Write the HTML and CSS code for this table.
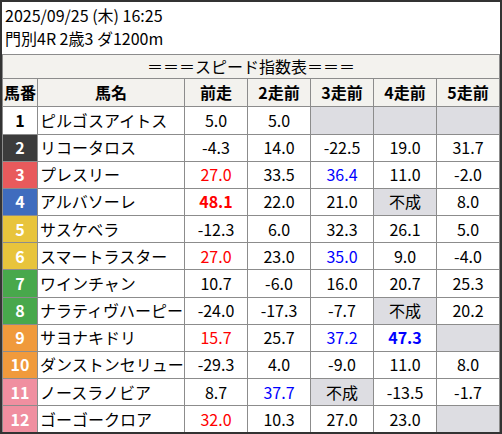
FILE: index.html
```html
<!DOCTYPE html>
<html lang="ja">
<head>
<meta charset="utf-8">
<link rel="stylesheet" href="styles.css">
</head>
<body>
<div class="wrap">
  <div class="info">
    <div>2025/09/25 (木) 16:25</div>
    <div>門別4R 2歳3 ダ1200m</div>
  </div>
  <table class="speed">
    <colgroup>
      <col class="c-no"><col class="c-name"><col class="c-v"><col class="c-v"><col class="c-v"><col class="c-v"><col class="c-v">
    </colgroup>
    <thead>
      <tr class="caption-row"><th colspan="7">＝＝＝スピード指数表＝＝＝</th></tr>
      <tr class="head-row"><th>馬番</th><th>馬名</th><th>前走</th><th>2走前</th><th>3走前</th><th>4走前</th><th>5走前</th></tr>
    </thead>
    <tbody>
      <tr><td class="no w1">1</td><td class="name">ピルゴスアイトス</td><td>5.0</td><td>5.0</td><td class="na"></td><td class="na"></td><td class="na"></td></tr>
      <tr><td class="no w2">2</td><td class="name">リコータロス</td><td>-4.3</td><td>14.0</td><td>-22.5</td><td>19.0</td><td>31.7</td></tr>
      <tr><td class="no w3">3</td><td class="name">プレスリー</td><td class="red">27.0</td><td>33.5</td><td class="blue">36.4</td><td>11.0</td><td>-2.0</td></tr>
      <tr><td class="no w4">4</td><td class="name">アルバソーレ</td><td class="red b">48.1</td><td>22.0</td><td>21.0</td><td class="na">不成</td><td>8.0</td></tr>
      <tr><td class="no w5">5</td><td class="name">サスケベラ</td><td>-12.3</td><td>6.0</td><td>32.3</td><td>26.1</td><td>5.0</td></tr>
      <tr><td class="no w5">6</td><td class="name">スマートラスター</td><td class="red">27.0</td><td>23.0</td><td class="blue">35.0</td><td>9.0</td><td>-4.0</td></tr>
      <tr><td class="no w7">7</td><td class="name">ワインチャン</td><td>10.7</td><td>-6.0</td><td>16.0</td><td>20.7</td><td>25.3</td></tr>
      <tr><td class="no w7">8</td><td class="name">ナラティヴハーピー</td><td>-24.0</td><td>-17.3</td><td>-7.7</td><td class="na">不成</td><td>20.2</td></tr>
      <tr><td class="no w9">9</td><td class="name">サヨナキドリ</td><td class="red">15.7</td><td>25.7</td><td class="blue">37.2</td><td class="blue b">47.3</td><td class="na"></td></tr>
      <tr><td class="no w9">10</td><td class="name">ダンストンセリュー</td><td>-29.3</td><td>4.0</td><td>-9.0</td><td>11.0</td><td>8.0</td></tr>
      <tr><td class="no w11">11</td><td class="name">ノースラノビア</td><td>8.7</td><td class="blue">37.7</td><td class="na">不成</td><td>-13.5</td><td>-1.7</td></tr>
      <tr><td class="no w11">12</td><td class="name">ゴーゴークロア</td><td class="red">32.0</td><td>10.3</td><td>27.0</td><td>23.0</td><td class="na"></td></tr>
    </tbody>
  </table>
</div>
</body>
</html>
```

FILE: styles.css
```css
html, body {
  margin: 0;
  padding: 0;
  background: #ffffff;
}
body {
  font-family: "Noto Sans CJK JP", "Noto Sans", sans-serif;
  font-size: 16px;
  color: #000;
}
.wrap {
  width: 498px;
  height: 430px;
  border: 2px solid #333333;
  overflow: hidden;
  background: #fff;
}
.info {
  height: 52px;
  box-sizing: border-box;
  padding: 2px 3px 0 3px;
  line-height: 23.17px;
}
.speed {
  width: 498px;
  border-collapse: collapse;
  table-layout: fixed;
}
.c-no { width: 35px; }
.c-name { width: 147px; }
.c-v { width: 63px; }
.speed th,
.speed td {
  border: 1px solid #8c8c8c;
  line-height: 23.17px;
  padding: 1.5px 0;
  text-align: center;
  white-space: nowrap;
  overflow: hidden;
}
.speed th {
  background: #f3f2ee;
  font-weight: bold;
}
.caption-row th {
  font-weight: normal;
  padding: 0;
}
.head-row th {
  padding: 2px 0;
}
.speed td.name {
  text-align: left;
  padding-left: 2px;
}
.speed td.no {
  font-weight: bold;
  color: #fff;
}
.w1 { background: #ffffff; color: #000 !important; }
.w2 { background: #3c3c3c; }
.w3 { background: #e85a5c; }
.w4 { background: #3f6cbe; }
.w5 { background: #e8c43c; }
.w7 { background: #48a84c; }
.w9 { background: #f09a3c; }
.w11 { background: #f08fa0; }
.speed td.na { background: #dddde2; }
.red { color: #ff0000; }
.blue { color: #0000ff; }
.b { font-weight: bold; }
```
